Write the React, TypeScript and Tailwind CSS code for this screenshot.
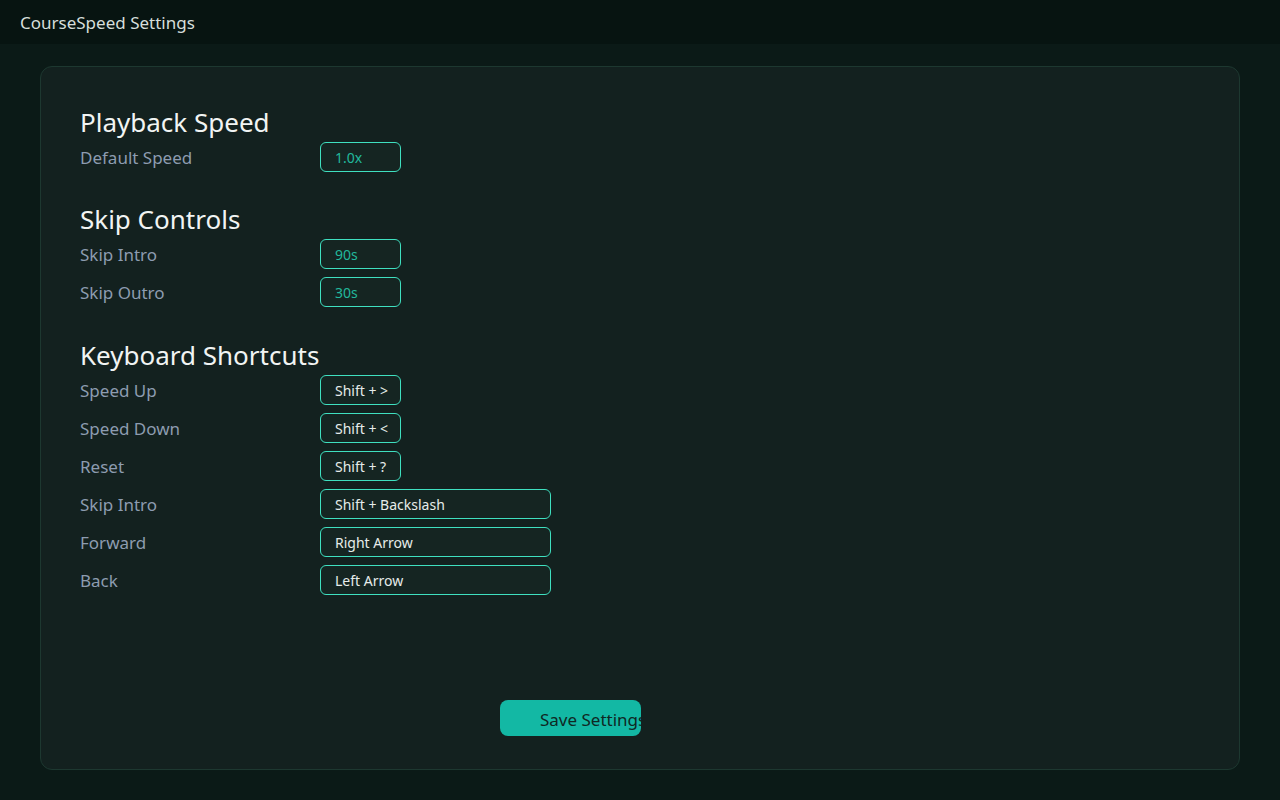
import React from "react";

const font = { fontFamily: '"Noto Sans", "Open Sans", sans-serif' };

function Row({ label, value, wide, teal }: { label: string; value: string; wide?: boolean; teal?: boolean }) {
  return (
    <div className="flex items-center h-[30px]">
      <div className="w-[240px] text-[17px] text-[#8d9cb0] pt-[2px]">{label}</div>
      <div
        className={`h-[30px] ${wide ? "w-[231px]" : "w-[81px]"} rounded-[6px] border border-[#3fe0c0] bg-[#152522] flex items-center pl-[14px] text-[14px] ${teal ? "text-[#22b89c]" : "text-[#e6ecea]"}`}
      >
        {value}
      </div>
    </div>
  );
}

function Section({ title, children, mt }: { title: string; children: React.ReactNode; mt: string }) {
  return (
    <div className={`flex flex-col ${mt}`}>
      <div className="text-[26px] leading-[32px] text-[#f1f4f3] mb-1">{title}</div>
      <div className="flex flex-col gap-2">{children}</div>
    </div>
  );
}

export default function App() {
  return (
    <div className="w-[1280px] h-[800px] bg-[#0b1a17] flex flex-col overflow-hidden" style={font}>
      <div className="h-[44px] bg-[#071411] flex items-center pl-[20px] pt-[2px] text-[17px] text-[#d6dedb]">
        CourseSpeed Settings
      </div>
      <div className="px-[40px] pt-[22px]">
        <div className="h-[704px] rounded-[12px] border border-[#1d3830] bg-[#13211f] px-[39px] pt-[39px]">
          <Section title="Playback Speed" mt="mt-0">
            <Row label="Default Speed" value="1.0x" teal />
          </Section>
          <Section title="Skip Controls" mt="mt-[31px]">
            <Row label="Skip Intro" value="90s" teal />
            <Row label="Skip Outro" value="30s" teal />
          </Section>
          <Section title="Keyboard Shortcuts" mt="mt-[32px]">
            <Row label="Speed Up" value="Shift + >" />
            <Row label="Speed Down" value="Shift + <" />
            <Row label="Reset" value="Shift + ?" />
            <Row label="Skip Intro" value="Shift + Backslash" wide />
            <Row label="Forward" value="Right Arrow" wide />
            <Row label="Back" value="Left Arrow" wide />
          </Section>
          <div className="mt-[105px] ml-[420px]">
            <div className="w-[141px] h-[36px] rounded-[8px] bg-[#13b8a4] overflow-hidden flex items-center pl-[40px] pt-[3px] whitespace-nowrap text-[17px] text-[#0f2824]">
              Save Settings
            </div>
          </div>
        </div>
      </div>
    </div>
  );
}
